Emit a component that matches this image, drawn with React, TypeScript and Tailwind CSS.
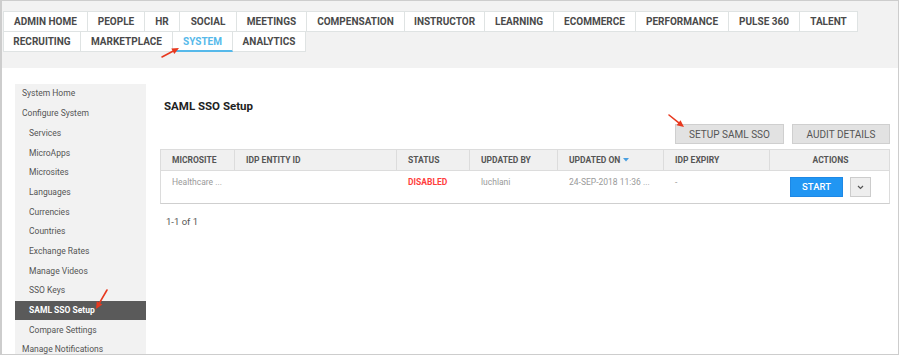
import React from "react";

const row1: [string, number][] = [
  ["ADMIN HOME", 84],
  ["PEOPLE", 57],
  ["HR", 35],
  ["SOCIAL", 57],
  ["MEETINGS", 70],
  ["COMPENSATION", 98],
  ["INSTRUCTOR", 80],
  ["LEARNING", 69],
  ["ECOMMERCE", 82],
  ["PERFORMANCE", 93],
  ["PULSE 360", 71],
  ["TALENT", 58],
];
const row2: [string, number][] = [
  ["RECRUITING", 77],
  ["MARKETPLACE", 92],
  ["SYSTEM", 60],
  ["ANALYTICS", 73],
];

const side: { t: string; sub?: boolean; active?: boolean }[] = [
  { t: "System Home" },
  { t: "Configure System" },
  { t: "Services", sub: true },
  { t: "MicroApps", sub: true },
  { t: "Microsites", sub: true },
  { t: "Languages", sub: true },
  { t: "Currencies", sub: true },
  { t: "Countries", sub: true },
  { t: "Exchange Rates", sub: true },
  { t: "Manage Videos", sub: true },
  { t: "SSO Keys", sub: true },
  { t: "SAML SSO Setup", sub: true, active: true },
  { t: "Compare Settings", sub: true },
  { t: "Manage Notifications" },
];

function Tab({ label, w }: { label: string; w: number }) {
  const active = label === "SYSTEM";
  return (
    <div
      style={{ width: w }}
      className={
        "h-[20px] flex items-center justify-center bg-white border-r border-[#dfe3e3] text-[10px] font-bold whitespace-nowrap " +
        (active
          ? "text-[#56b9ea] border-b-2 border-b-[#56b9ea]"
          : "text-[#4a4a4a] border-b border-b-[#dfe3e3]")
      }
    >
      {label}
    </div>
  );
}

function Arrow({ x1, y1, x2, y2 }: { x1: number; y1: number; x2: number; y2: number }) {
  const ang = Math.atan2(y2 - y1, x2 - x1);
  const L = 7;
  const W = 3.2;
  const bx = x2 - L * Math.cos(ang);
  const by = y2 - L * Math.sin(ang);
  const px = -Math.sin(ang) * W;
  const py = Math.cos(ang) * W;
  return (
    <g>
      <line x1={x1} y1={y1} x2={bx} y2={by} stroke="#e8391f" strokeWidth={1.6} strokeLinecap="round" />
      <polygon points={`${x2},${y2} ${bx + px},${by + py} ${bx - px},${by - py}`} fill="#e8391f" />
    </g>
  );
}

const cols = "grid grid-cols-[74px_162px_73px_88px_106px_106px_121px]";

export default function App() {
  return (
    <div className="relative w-[900px] h-[356px] bg-white overflow-hidden" style={{ fontFamily: "Roboto, 'Liberation Sans', sans-serif" }}>
      <div className="w-[899px] h-[355px] border border-[#cdcdcd] border-l-2 flex flex-col overflow-hidden">
        {/* top band */}
        <div className="h-[67px] bg-[#f2f2f2] pt-[10px] pl-[1px] shrink-0">
          <div className="flex w-max border-l border-t border-[#dfe3e3]">
            {row1.map(([l, w]) => (
              <Tab key={l} label={l} w={w} />
            ))}
          </div>
          <div className="flex w-max border-l border-[#dfe3e3]">
            {row2.map(([l, w]) => (
              <Tab key={l} label={l} w={w} />
            ))}
          </div>
        </div>
        {/* body */}
        <div className="flex flex-1">
          <div className="ml-[13px] mt-[16px] w-[131px] bg-[#f2f2f2] self-stretch">
            {side.map((s) => (
              <div
                key={s.t}
                className={
                  "h-[19.7px] flex items-center text-[8.5px] whitespace-nowrap " +
                  (s.sub ? "pl-[14px] " : "pl-[7px] ") +
                  (s.active ? "bg-[#5a5a5a] text-white font-bold" : "text-[#555]")
                }
              >
                {s.t}
              </div>
            ))}
          </div>
          <div className="ml-[14px] w-[730px] pt-[30px]">
            <div className="ml-[4px] text-[11.5px] leading-[16px] font-bold text-[#222]">SAML SSO Setup</div>
            <div className="flex justify-end gap-[8px] mt-[10px]">
              <div className="w-[109px] h-[20px] flex items-center justify-center bg-[#e2e2e2] border border-[#cfcfcf] text-[10px] text-[#555]">
                SETUP SAML SSO
              </div>
              <div className="w-[98px] h-[20px] flex items-center justify-center bg-[#e2e2e2] border border-[#cfcfcf] text-[10px] text-[#555]">
                AUDIT DETAILS
              </div>
            </div>
            <div className="mt-[5px] border border-[#dcdcdc] border-b-[#cfcfcf]">
              <div className={cols + " h-[21px] bg-[#f0f0f0] border-b border-[#dcdcdc] text-[8.5px] font-bold text-[#555]"}>
                {["MICROSITE", "IDP ENTITY ID", "STATUS", "UPDATED BY", "UPDATED ON", "IDP EXPIRY"].map((h) => (
                  <div key={h} className="flex items-center pl-[11px] border-r border-[#dcdcdc] whitespace-nowrap">
                    {h}
                    {h === "UPDATED ON" && (
                      <svg width="6" height="4" viewBox="0 0 6 4" className="ml-[3px]">
                        <polygon points="0,0 6,0 3,3.5" fill="#4a9fe0" />
                      </svg>
                    )}
                  </div>
                ))}
                <div className="flex items-center justify-center">ACTIONS</div>
              </div>
              <div className={cols + " h-[32px] text-[8.5px] text-[#9a9a9a]"}>
                <div className="pl-[11px] pt-[5px] leading-[12px]">Healthcare ...</div>
                <div />
                <div className="pl-[11px] pt-[5px] leading-[12px] font-bold text-[#ff3d3d]">DISABLED</div>
                <div className="pl-[11px] pt-[5px] leading-[12px]">luchlani</div>
                <div className="pl-[11px] pt-[5px] leading-[12px] whitespace-nowrap">24-SEP-2018 11:36 ...</div>
                <div className="pl-[11px] pt-[5px] leading-[12px]">-</div>
                <div className="flex justify-center gap-[7px] pt-[6px]">
                  <div className="w-[53px] h-[20px] bg-[#2196f3] border border-[#1e88e5] text-white text-[9.5px] font-medium flex items-center justify-center">
                    START
                  </div>
                  <div className="w-[21px] h-[20px] bg-[#eeeeee] border border-[#cccccc] flex items-center justify-center">
                    <svg width="7" height="5" viewBox="0 0 7 5">
                      <polyline points="1,1 3.5,3.5 6,1" fill="none" stroke="#555" strokeWidth="1.2" />
                    </svg>
                  </div>
                </div>
              </div>
            </div>
            <div className="ml-[6px] mt-[11px] text-[9.5px] leading-[14px] text-[#555]">1-1 of 1</div>
          </div>
        </div>
      </div>
      <svg className="absolute left-0 top-0 pointer-events-none" width="900" height="356">
        <Arrow x1={162} y1={57} x2={179} y2={48} />
        <Arrow x1={669} y1={115} x2={684} y2={127} />
        <Arrow x1={107} y1={290} x2={96} y2={309} />
      </svg>
    </div>
  );
}
